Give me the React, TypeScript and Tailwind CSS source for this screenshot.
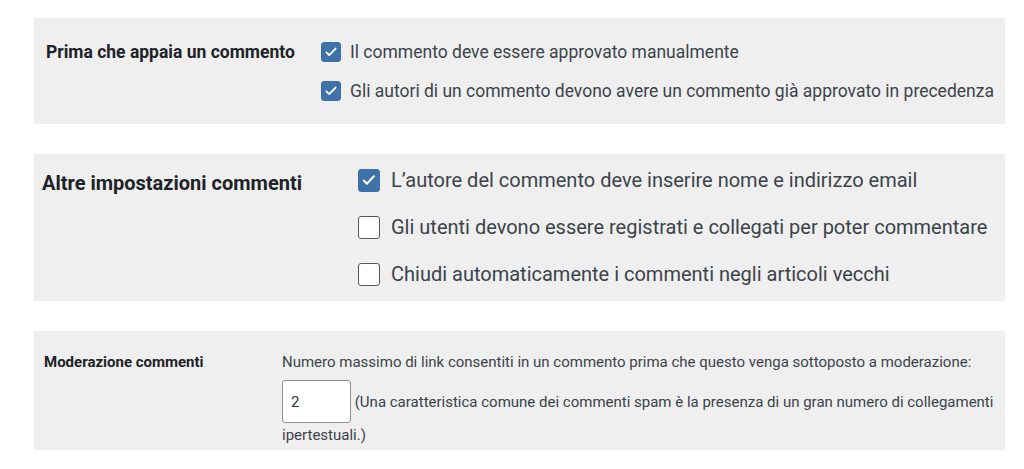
import { useState } from "react";

// Casella di spunta in stile pannello di amministrazione
const Check = ({
  checked,
  size,
  onToggle,
}: {
  checked: boolean;
  size: "sm" | "lg";
  onToggle: () => void;
}) => {
  const box = size === "sm" ? "w-[20px] h-[20px]" : "w-[22px] h-[23px]";
  return (
    <button
      type="button"
      onClick={onToggle}
      className={`${box} shrink-0 rounded-[3px] flex items-center justify-center ${
        checked ? "bg-[#3e72a8] border border-[#3e72a8]" : "bg-white border-[1.5px] border-[#50575e]"
      }`}
    >
      {checked && (
        <svg viewBox="0 0 20 20" className="w-[78%] h-[78%]" fill="none">
          <path d="M3.5 10.5l4 4 9-9.5" stroke="white" strokeWidth="2.6" strokeLinecap="round" strokeLinejoin="round" />
        </svg>
      )}
    </button>
  );
};

const App = () => {
  const [opts, setOpts] = useState({
    manuale: true,
    giaApprovato: true,
    nomeEmail: true,
    registrati: false,
    chiudi: false,
  });
  const [maxLink, setMaxLink] = useState("2");

  const toggle = (k: keyof typeof opts) => setOpts((p) => ({ ...p, [k]: !p[k] }));

  return (
    <div className="w-[1024px] h-[469px] bg-white pt-[18px] pl-[34px] font-['Roboto',sans-serif] text-[#3c434a]">
      <div className="w-[971px] flex flex-col">
        {/* Prima che appaia un commento */}
        <div className="bg-[#efefef] flex items-start pl-[12px] pt-[24px] pb-[23px]">
          <div className="w-[275px] leading-[20px] text-[17.5px] font-bold text-[#1d2327]">Prima che appaia un commento</div>
          <div className="flex flex-col gap-[19px] text-[17.5px]">
            <label className="flex items-center gap-[9px] h-[20px]">
              <Check size="sm" checked={opts.manuale} onToggle={() => toggle("manuale")} />
              Il commento deve essere approvato manualmente
            </label>
            <label className="flex items-center gap-[9px] h-[20px]">
              <Check size="sm" checked={opts.giaApprovato} onToggle={() => toggle("giaApprovato")} />
              Gli autori di un commento devono avere un commento già approvato in precedenza
            </label>
          </div>
        </div>

        {/* Altre impostazioni commenti */}
        <div className="mt-[30px] bg-[#efefef] flex items-start pl-[8px] pt-[14px] pb-[15px]">
          <div className="w-[316px] mt-[3px] leading-[24px] text-[20px] font-bold text-[#1d2327]">Altre impostazioni commenti</div>
          <div className="flex flex-col gap-[23px] text-[20px]">
            <label className="flex items-center gap-[11px] h-[24px]">
              <Check size="lg" checked={opts.nomeEmail} onToggle={() => toggle("nomeEmail")} />
              L’autore del commento deve inserire nome e indirizzo email
            </label>
            <label className="flex items-center gap-[11px] h-[24px]">
              <Check size="lg" checked={opts.registrati} onToggle={() => toggle("registrati")} />
              Gli utenti devono essere registrati e collegati per poter commentare
            </label>
            <label className="flex items-center gap-[11px] h-[24px]">
              <Check size="lg" checked={opts.chiudi} onToggle={() => toggle("chiudi")} />
              Chiudi automaticamente i commenti negli articoli vecchi
            </label>
          </div>
        </div>

        {/* Moderazione commenti */}
        <div className="mt-[30px] bg-[#efefef] flex items-start pl-[10px] pt-[19px] pb-[4px]">
          <div className="w-[238px] leading-[24px] text-[15px] font-bold text-[#1d2327]">Moderazione commenti</div>
          <div className="flex-1 pr-[6px] text-[15px]">
            <p className="leading-[24px]">
              Numero massimo di link consentiti in un commento prima che questo venga sottoposto a moderazione:
            </p>
            <p className="mt-[6px] leading-[22px]">
              <input
                value={maxLink}
                onChange={(e) => setMaxLink(e.target.value)}
                className="w-[69px] h-[43px] align-middle bg-white border border-[#8c8f94] rounded-[3px] px-[8px] text-[15px] text-[#2c3338] outline-none"
              />{" "}
              <span className="align-middle">
                (Una caratteristica comune dei commenti spam è la presenza di un gran numero di collegamenti ipertestuali.)
              </span>
            </p>
          </div>
        </div>
      </div>
    </div>
  );
};

export default App;
